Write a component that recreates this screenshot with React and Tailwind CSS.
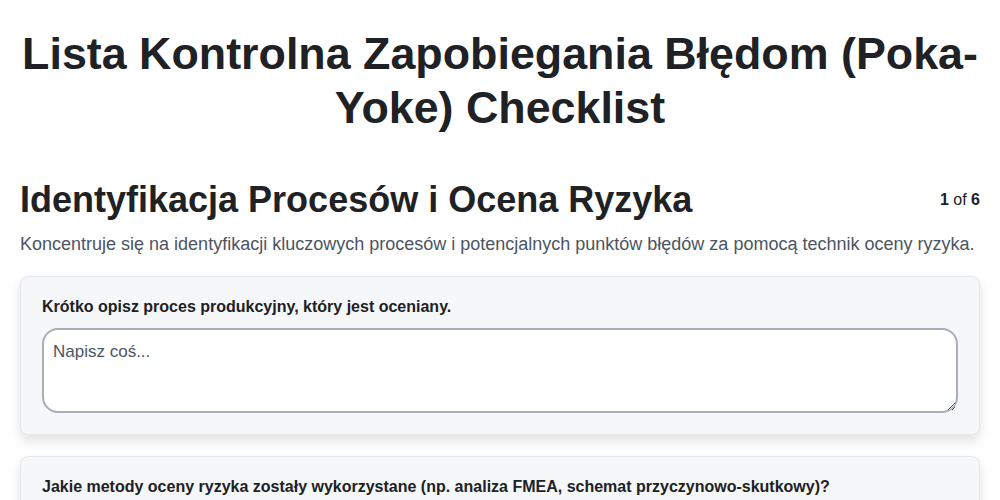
const questions = [
  "Krótko opisz proces produkcyjny, który jest oceniany.",
  "Jakie metody oceny ryzyka zostały wykorzystane (np. analiza FMEA, schemat przyczynowo-skutkowy)?",
];

export default function App() {
  return (
    <div className="min-h-screen bg-white px-5 pt-[26px] font-['Liberation_Sans',Arial,sans-serif] text-[#1f2328]">
      <h1 className="text-center text-[44.8px] font-bold leading-[54px] text-[#202124]">
        Lista Kontrolna Zapobiegania Błędom (Poka-Yoke) Checklist
      </h1>

      <div className="mt-[44px] flex items-start justify-between">
        <h2 className="text-4xl font-bold leading-[44px] text-[#202124]">
          Identyfikacja Procesów i Ocena Ryzyka
        </h2>
        <div className="mt-[10px] text-base text-[#202124]">
          <span className="font-bold">1</span> of <span className="font-bold">6</span>
        </div>
      </div>
      <p className="mt-[8px] text-lg leading-7 text-[#4b5563]">
        Koncentruje się na identyfikacji kluczowych procesów i potencjalnych punktów błędów za pomocą technik oceny ryzyka.
      </p>

      <div className="mt-[18px] flex flex-col gap-[21px]">
        {questions.map((q) => (
          <div
            key={q}
            className="rounded-lg border border-[#e5e7eb] bg-[#f6f7f9] px-[21px] pb-[21px] pt-[18px] shadow-[0_6px_12px_rgba(0,0,0,0.12)]"
          >
            <label className="block text-base font-bold leading-6 text-[#202124]">{q}</label>
            <textarea
              placeholder="Napisz coś..."
              className="mt-[9px] block h-[85px] w-full rounded-2xl border-2 border-[#a8aeb6] bg-white px-[9px] py-[9px] text-[17px] text-[#202124] placeholder:text-[#4b5563]"
            />
          </div>
        ))}
      </div>
    </div>
  );
}
